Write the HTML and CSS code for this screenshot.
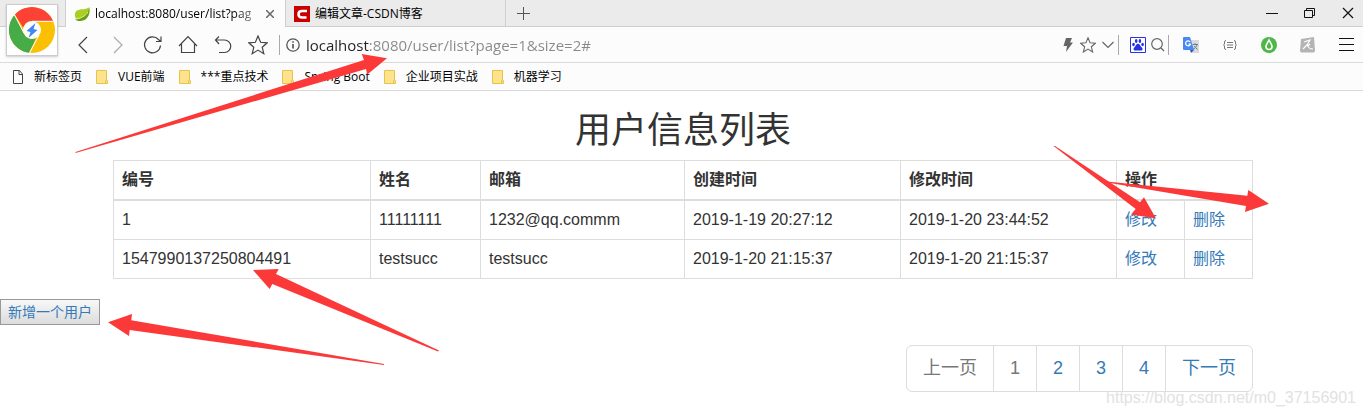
FILE: index.html
```html
<!DOCTYPE html>
<html lang="zh-CN">
<head>
<meta charset="utf-8">
<title>用户信息列表</title>
<link rel="stylesheet" href="styles.css">
</head>
<body>
<header class="browser">
  <div class="tabbar">
    <div class="tab tab-active">
      <svg class="tab-icon" viewBox="0 0 16 16"><path d="M15.500 1C12 4 7 2.500 3 4.500C0 6.500 .5 11 2.500 13C9 12.500 15 9 15.500 1Z" fill="#a9cf25"/><path d="M15.500 2C16.500 9 13 14.500 7 15C4 15.200 2 14.500 1 13.500C7 12.500 13.500 9 15.500 2Z" fill="#6a9e0c"/><path d="M2 13C7 12.500 12 9.500 14 6" stroke="#e6f29c" fill="none"/></svg>
      <span class="tab-title tab-fade">localhost:8080/user/list?pag</span>
      <button class="tab-close" aria-label="关闭标签页"><svg width="8" height="8" viewBox="0 0 8 8"><path d="M0 0L8 8M8 0L0 8" stroke="#666" stroke-width="1.500"/></svg></button>
    </div>
    <div class="tab">
      <svg class="tab-icon" viewBox="0 0 16 16"><path d="M0 0H16V16H0Z" fill="#c80000"/><path d="M13 5H8Q4.500 5 4.500 8.200Q4.500 11.500 8 11.500H12.500" fill="none" stroke="#fff" stroke-width="2.600"/></svg>
      <span class="tab-title">编辑文章-CSDN博客</span>
    </div>
    <button class="new-tab" aria-label="新标签页"><svg width="13" height="13" viewBox="0 0 13 13"><path d="M6.500 0V13M0 6.500H13" stroke="#555"/></svg></button>
    <div class="window-controls">
      <button aria-label="最小化"><svg width="12" height="12" viewBox="0 0 12 12"><path d="M0 6.500H12" stroke="#111"/></svg></button>
      <button aria-label="还原"><svg width="12" height="12" viewBox="0 0 12 12"><path d="M.5 3.500H8.500V10.500H.5ZM2.500 3V1.500H10.500V8.500H9" fill="none" stroke="#111"/></svg></button>
      <button aria-label="关闭"><svg width="12" height="12" viewBox="0 0 12 12"><path d="M1 1L11 11M11 1L1 11" stroke="#111" stroke-width="1.200"/></svg></button>
    </div>
  </div>

  <div class="toolbar">
    <nav class="nav-buttons">
      <button aria-label="后退"><svg viewBox="0 0 20 20"><path d="M14 2L6 10L14 18"/></svg></button>
      <button class="dim" aria-label="前进"><svg viewBox="0 0 20 20"><path d="M6 2L14 10L6 18"/></svg></button>
      <button aria-label="刷新"><svg viewBox="0 0 20 20"><path d="M17.500 10.500A8 8 0 1 1 15.500 4.500L17.500 6.500M18 1.500V6.500H13"/></svg></button>
      <button aria-label="主页"><svg viewBox="0 0 20 20"><path d="M1 11L10 1.500L19 11M3.500 9V17.500H16.500V9"/></svg></button>
      <button aria-label="恢复"><svg viewBox="0 0 20 20"><path d="M6 1.500L2.500 5L6 9M2.500 5H11.500A6.200 6.200 0 0 1 11.500 17.500H6"/></svg></button>
      <button aria-label="收藏"><svg viewBox="0 0 20 20"><path d="M10 1L12.600 7.300L19.200 7.800L14.200 12.200L15.800 18.700L10 15.100L4.200 18.700L5.800 12.200L.8 7.800L7.400 7.300Z"/></svg></button>
    </nav>
    <span class="divider"></span>
    <svg class="info" viewBox="0 0 14 14"><circle cx="7" cy="7" r="6.200" fill="none" stroke="#555" stroke-width="1.300"/><path d="M7 6V10.500M7 3.200V4.700" stroke="#444" stroke-width="1.500"/></svg>
    <input class="address" type="text" aria-label="地址栏" value="localhost:8080/user/list?page=1&amp;size=2#" spellcheck="false">
    <div class="address-actions">
      <button aria-label="极速模式"><svg width="10" height="14" viewBox="0 0 10 14"><path d="M3 0H9L7 4.500H10L3 14L4 8H.5Z" fill="#666"/></svg></button>
      <button aria-label="收藏此页"><svg width="16" height="16" viewBox="0 0 20 20"><path d="M10 1L12.600 7.300L19.200 7.800L14.200 12.200L15.800 18.700L10 15.100L4.200 18.700L5.800 12.200L.8 7.800L7.400 7.300Z" fill="none" stroke="#666" stroke-width="1.400"/></svg></button>
      <button aria-label="更多"><svg width="12" height="8" viewBox="0 0 12 8"><path d="M.5 1L6 6.500L11.500 1" fill="none" stroke="#666" stroke-width="1.200"/></svg></button>
    </div>
    <span class="divider"></span>
    <div class="search-actions">
      <button aria-label="百度搜索"><svg width="16" height="16" viewBox="0 0 16 16"><path d="M.5 .5H15.500V15.500H.5Z" fill="#fff" stroke="#2733e0"/><g fill="#2733e0"><ellipse cx="3.500" cy="7.500" rx="1.300" ry="1.800"/><ellipse cx="6.200" cy="4" rx="1.300" ry="1.900"/><ellipse cx="9.900" cy="4" rx="1.300" ry="1.900"/><ellipse cx="12.600" cy="7.500" rx="1.300" ry="1.800"/><path d="M8 6.800C6 6.800 6 9 4.500 10.200C2.500 12 4 13.800 5.500 13.500H10.500C12.500 13.800 13.500 12 11.500 10.200C10 9 10 6.800 8 6.800Z"/></g></svg></button>
      <button aria-label="搜索"><svg width="14" height="14" viewBox="0 0 14 14"><path d="M10 10L13 13" stroke="#666" stroke-width="1.200"/><circle cx="6" cy="6" r="5.300" fill="none" stroke="#666" stroke-width="1.200"/></svg></button>
    </div>
    <span class="divider"></span>
    <div class="extensions">
      <button aria-label="翻译"><svg width="16" height="16" viewBox="0 0 16 16"><path d="M6 3H16V16H9Z" fill="#d9dadb"/><path d="M9.500 7.500H15M12 6V8M14 8Q13 11 10 12.500M11 9L14.500 12.500" fill="none" stroke="#6d8290" stroke-width="1"/><path d="M7 13H11L8 16Z" fill="#3850b7"/><path d="M1 0H7L11 13H1Q0 13 0 12V1Q0 0 1 0Z" fill="#4589f1"/><path d="M7.200 5A2.500 2.500 0 1 0 7.500 7H5.300" fill="none" stroke="#fff" stroke-width="1.200"/></svg></button>
      <button aria-label="JSON"><svg width="14" height="10" viewBox="0 0 14 10"><path d="M3 .5Q1.500 .5 1.500 2V4L.5 5L1.500 6V8Q1.500 9.500 3 9.500M11 .5Q12.500 .5 12.500 2V4L13.500 5L12.500 6V8Q12.500 9.500 11 9.500M4 2.500H10M4 5H10M4 7.500H10" fill="none" stroke="#777"/></svg></button>
      <button aria-label="印象"><svg width="16" height="16" viewBox="0 0 16 16"><circle cx="8" cy="8" r="8" fill="#4db748"/><path d="M8 3C6.500 6 5 7.500 5 9.500A3 3 0 0 0 11 9.500C11 7.500 9.500 6 8 3Z" fill="none" stroke="#fff" stroke-width="1.600"/></svg></button>
      <button aria-label="阅读"><svg width="16" height="16" viewBox="0 0 16 16"><path d="M1 2L14 0L15 14L14 15.500H1L0 14Z" fill="#b4b4b4"/><path d="M4 5L10 3Q8 8 3 12M7 7Q8 12 13 12M10 7L8 9" fill="none" stroke="#fff" stroke-width="1.200"/></svg></button>
    </div>
    <button class="menu" aria-label="菜单"><svg width="16" height="14" viewBox="0 0 16 14"><path d="M0 .5H15M0 6.500H15M0 12.500H15" stroke="#111"/></svg></button>
  </div>

  <nav class="bookmarks">
    <a href="#"><svg viewBox="0 0 12 14"><path d="M1.500 .5H7.500L10.500 4V13.500H1.500ZM7 .5V4.500H10.500" fill="none" stroke="#444"/></svg>新标签页</a>
    <a href="#"><svg viewBox="0 0 12 14"><path class="folder" d="M.5 .5H10.500V9.500L11.500 11V13.500H.5ZM9.500 13V10.500L11 9.500"/></svg>VUE前端</a>
    <a href="#"><svg viewBox="0 0 12 14"><path class="folder" d="M.5 .5H10.500V9.500L11.500 11V13.500H.5ZM9.500 13V10.500L11 9.500"/></svg>***重点技术</a>
    <a href="#"><svg viewBox="0 0 12 14"><path class="folder" d="M.5 .5H10.500V9.500L11.500 11V13.500H.5ZM9.500 13V10.500L11 9.500"/></svg>Spring Boot</a>
    <a href="#"><svg viewBox="0 0 12 14"><path class="folder" d="M.5 .5H10.500V9.500L11.500 11V13.500H.5ZM9.500 13V10.500L11 9.500"/></svg>企业项目实战</a>
    <a href="#"><svg viewBox="0 0 12 14"><path class="folder" d="M.5 .5H10.500V9.500L11.500 11V13.500H.5ZM9.500 13V10.500L11 9.500"/></svg>机器学习</a>
  </nav>

  <div class="profile">
    <svg viewBox="0 0 46 46"><circle cx="23" cy="23" r="23" fill="#fbc004"/><path d="M6 7.500A23 23 0 0 1 44 14H23A9 9 0 0 0 14.500 21Z" fill="#fc4236"/><path d="M5.500 8A23 23 0 0 0 20 45.800L27 31A9 9 0 0 1 15 27Z" fill="#45ac48"/><path d="M5.500 8L15 26M44 14.300H23M20.500 46L30 28" stroke="#fff" fill="none"/><circle cx="23" cy="23" r="9" fill="#fff"/><path d="M26.500 16L17.500 24L21.500 25L19.500 31L28.500 23L24.500 22Z" fill="#4285f4"/></svg>
  </div>
</header>

<main class="page">
  <h1 class="title">用户信息列表</h1>
  <div class="container">
    <table class="users">
      <colgroup><col class="c-id"><col class="c-name"><col class="c-mail"><col class="c-time"><col class="c-time"><col class="c-op"><col class="c-op"></colgroup>
      <thead>
        <tr><th>编号</th><th>姓名</th><th>邮箱</th><th>创建时间</th><th>修改时间</th><th colspan="2">操作</th></tr>
      </thead>
      <tbody>
        <tr><td>1</td><td>11111111</td><td>1232@qq.commm</td><td>2019-1-19 20:27:12</td><td>2019-1-20 23:44:52</td><td><a href="#">修改</a></td><td><a href="#">删除</a></td></tr>
        <tr><td>1547990137250804491</td><td>testsucc</td><td>testsucc</td><td>2019-1-20 21:15:37</td><td>2019-1-20 21:15:37</td><td><a href="#">修改</a></td><td><a href="#">删除</a></td></tr>
      </tbody>
    </table>
  </div>
  <button class="add-user">新增一个用户</button>
  <nav class="container pager">
    <ul class="pagination">
      <li><a class="muted" href="#">上一页</a></li>
      <li><a class="muted" href="#">1</a></li>
      <li><a href="#">2</a></li>
      <li><a href="#">3</a></li>
      <li><a href="#">4</a></li>
      <li><a href="#">下一页</a></li>
    </ul>
  </nav>
</main>

<div class="watermark">https://blog.csdn.net/m0_37156901</div>
<svg class="arrows" width="1363" height="416" viewBox="0 0 1363 416" aria-hidden="true">
  <path d="M75.500 153L75.500 152L364 60L361.700 54L387 58.300L367.300 74.500L366 69Z"/>
  <path d="M1053.500 146L1055 146L1140 202.300L1144 197.300L1156 218.500L1131 214.500L1135.700 209Z"/>
  <path d="M1107 182.500V181.500L1247.300 195.700L1248.300 190L1269 203.700L1245 212L1246 206Z"/>
  <path d="M438 351.500L439 350.500L276 274L278.700 269L253 270L269.700 289L272.300 284Z"/>
  <path d="M384 365V364L131.300 320.300L132 314L108 322.300L129 336L129.700 330Z"/>
</svg>
</body>
</html>
```
FILE: styles.css
```css
* { box-sizing: border-box; }

body {
  margin: 0;
  position: relative;
  min-height: 100vh;
  background: #fff;
  color: #333;
  font: 16px/22px "Liberation Sans", "Noto Sans CJK SC", sans-serif;
}

a { color: #337ab7; text-decoration: none; }

button {
  border: 0;
  padding: 0;
  background: none;
  font: inherit;
  color: inherit;
}

svg { display: block; flex: none; }

/* Browser frame */
.browser {
  position: relative;
  font: 12px/18px "Open Sans", "Noto Sans CJK SC", sans-serif;
  color: #000;
  background: #fcfcfc;
}

.browser button {
  display: flex;
  align-items: center;
  justify-content: center;
}

.tabbar {
  display: flex;
  height: 27px;
  padding-left: 65px;
  background: #ebebeb;
  box-shadow: inset 0 -1px #cfcfcf;
}

.tab {
  display: flex;
  align-items: center;
  gap: 5px;
  width: 220px;
  padding: 0 9px 0 8px;
  border-right: 1px solid #cfcfcf;
}

.tab-active { background: #fcfcfc; border-left: 1px solid #cfcfcf; width: 221px; }
.tab-icon { width: 16px; height: 16px; }
.tab-title { flex: 1; white-space: nowrap; }
.tab-fade { mask-image: linear-gradient(90deg, #000 85%, #0004); }
.tab-close { width: 12px; }
.new-tab { width: 34px; }

.window-controls { display: flex; gap: 8px; margin-left: auto; padding-bottom: 2px; }
.window-controls button { width: 30px; }

.toolbar {
  display: flex;
  align-items: center;
  height: 36px;
  padding-left: 65px;
  border-bottom: 1px solid #dadada;
}

.nav-buttons { display: flex; margin-right: 4px; }
.nav-buttons button { width: 35px; }
.nav-buttons svg { width: 20px; height: 20px; fill: none; stroke: #444; stroke-width: 1.2; }
.nav-buttons .dim svg { stroke: #aaa; }
.divider { width: 1px; height: 20px; background: #aaa; }
.info { width: 14px; height: 14px; margin: 0 6px; }

.address {
  flex: 1;
  min-width: 0;
  padding: 0;
  border: 0;
  font: 15px/22px "Open Sans", sans-serif;
  color: #888;
  background: linear-gradient(90deg, #222 63px, #888 63px);
  background-clip: text;
  -webkit-text-fill-color: transparent;
}

.address-actions, .search-actions, .extensions { display: flex; align-items: center; }
.address-actions button, .search-actions button { width: 20px; height: 20px; }
.search-actions { padding-left: 9px; }
.extensions { padding-left: 2px; }
.extensions button { width: 39px; }
.menu { padding: 0 8px 0 12px; }

.bookmarks {
  display: flex;
  align-items: center;
  gap: 14px;
  height: 28px;
  padding-left: 12px;
  border-bottom: 1px solid #dadada;
}

.bookmarks a { display: flex; align-items: center; gap: 10px; color: #000; }
.bookmarks svg { width: 12px; height: 14px; }
.folder { fill: #ffe38c; stroke: #e6c34a; }

.profile {
  position: absolute;
  left: 6px;
  top: 4px;
  padding: 2px;
  background: #fff;
  border: 1px solid #ccc;
  box-shadow: 0 1px 2px #0003;
}

.profile svg { width: 46px; height: 46px; }

/* Page */
.page { padding: 20px 0 20px 3px; }

.title {
  margin: 0 0 9px;
  font-size: 36px;
  line-height: 40px;
  font-weight: 400;
  text-align: center;
}

.container { max-width: 1140px; margin: 0 auto; }

.users {
  width: 100%;
  table-layout: fixed;
  border-collapse: collapse;
}

.users th, .users td { padding: 8px; border: 1px solid #ddd; text-align: left; }
.users th { border-bottom-width: 2px; font-weight: 700; }
.c-id { width: 257px; }
.c-name { width: 110px; }
.c-mail { width: 204px; }
.c-time { width: 216px; }
.c-op { width: 68px; }

.add-user {
  display: block;
  margin: 20px 0 20px -3px;
  padding: 1px 7px;
  border: 1px solid #999;
  background: linear-gradient(#f8f8f8, #dcdcdc);
  color: #337ab7;
  font-size: 14px;
}

.pager { display: flex; justify-content: flex-end; }

.pagination {
  display: flex;
  margin: 0;
  padding: 0;
  list-style: none;
  border: 1px solid #ddd;
  border-radius: 6px;
  font-size: 18px;
  line-height: 25px;
}

.pagination a { display: block; padding: 10px 16px; }
.pagination li + li { border-left: 1px solid #ddd; }
.pagination .muted { color: #777; }

/* Overlays */
.watermark {
  position: absolute;
  right: 7px;
  bottom: 7px;
  color: #e2e2e2;
}

.arrows {
  position: absolute;
  left: 0;
  top: 0;
  fill: #fc3939;
  pointer-events: none;
}
```
